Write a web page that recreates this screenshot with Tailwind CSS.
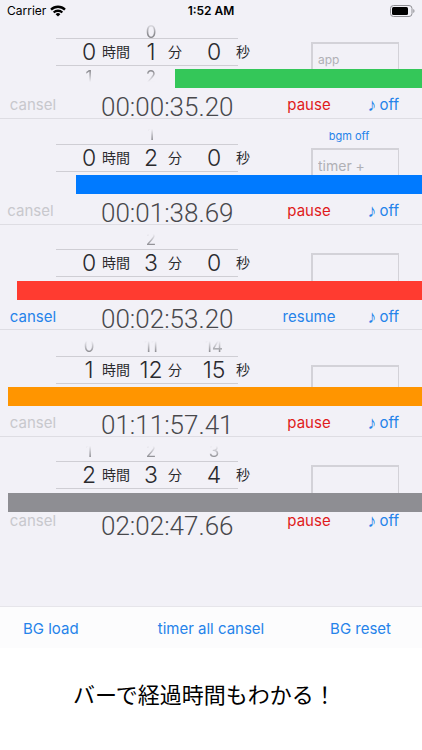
<!DOCTYPE html>
<html lang="ja">
<head>
<meta charset="utf-8">
<meta name="viewport" content="width=device-width, initial-scale=1">
<title>Timers</title>
<script src="https://cdn.jsdelivr.net/npm/@tailwindcss/browser@4"></script>
</head>
<body class="flex min-h-screen flex-col bg-white font-['Inter','Noto_Sans_CJK_JP',sans-serif] text-[#2a2a2e]">
<header class="grid h-[22px] grid-cols-3 items-center bg-[#f2f1f7] pr-[7px] pl-[7px] text-black">
  <div class="flex items-center gap-1 text-[12px]">
    <span>Carrier</span>
    <svg class="h-[12px] w-[16px]" viewBox="0 0 16 12" fill="none" stroke="currentColor" stroke-width="2.3" aria-label="Wi-Fi">
      <path d="M1 4.6a10 10 0 0 1 14 0"/>
      <path d="M3.7 7.5a6.1 6.1 0 0 1 8.6 0"/>
      <path d="M8 11.6 5.6 9.2a3.4 3.4 0 0 1 4.8 0z" fill="currentColor" stroke="none"/>
    </svg>
  </div>
  <div class="text-center text-[12px] font-semibold">1:52 AM</div>
  <svg class="h-[12px] w-[25px] justify-self-end" viewBox="0 0 25 12" aria-label="Battery">
    <rect x=".5" y=".5" width="21.5" height="11" rx="3" fill="none" stroke="#8e8e93"/>
    <rect x="2" y="2" width="16" height="8" rx="1.5" fill="#000"/>
    <path d="M23.3 4v4c1.6-.6 1.6-3.4 0-4z" fill="#8e8e93"/>
  </svg>
</header>

<main id="timers" class="bg-[#f2f1f7] pb-[65px]"></main>

<nav class="grid h-[42px] grid-cols-[1fr_auto_1fr] items-center border-t border-[#e6e5ea] bg-[#fcfcfd] pt-[3px] text-[15px] text-[#2583ea]">
  <button type="button" class="justify-self-start pl-[23px]">BG load</button>
  <button type="button">timer all cansel</button>
  <button type="button" class="justify-self-end pr-[31px]">BG reset</button>
</nav>

<p class="bg-white pt-[29px] pl-[73px] font-['Noto_Sans_CJK_JP',sans-serif] text-[22px] leading-[32px] text-black">バーで経過時間もわかる！</p>

<script>
const timers = [
  { prev: ['', '0', ''], now: [0, 1, 0], next: [1, 2, 1], time: '00:00:35.20', left: 58.5, color: 'bg-[#34c759]', top: 'h-[16px]', below: 'h-[22px]', foot: 'h-[31px] items-center border-b', box: 'pt-[20px]', label: 'app', size: 'text-[12px]' },
  { prev: ['', '1', ''], now: [0, 2, 0], next: [1, 3, 1], time: '00:01:38.69', left: 82, color: 'bg-[#007aff]', top: 'h-[25px]', below: 'h-[22px]', foot: 'h-[31px] items-center border-b', box: '', label: 'timer +', size: 'text-[14px]', bgm: true },
  { prev: ['', '2', ''], now: [0, 3, 0], next: [1, 4, 1], time: '00:02:53.20', left: 96, color: 'bg-[#ff3b30]', top: 'h-[24px]', below: 'h-[23px]', foot: 'h-[30px] items-center border-b', box: 'pt-[28px]', label: '', size: 'text-[14px]', paused: true },
  { prev: [0, 11, 14], now: [1, 12, 15], next: [2, 13, 16], time: '01:11:57.41', left: 98.2, color: 'bg-[#ff9500]', top: 'h-[26px]', below: 'h-[22px]', foot: 'h-[31px] items-center border-b', box: 'pt-[35px]', label: '', size: 'text-[14px]' },
  { prev: [1, 2, 3], now: [2, 3, 4], next: [3, 4, 5], time: '02:02:47.66', left: 98, color: 'bg-[#8e8e93]', top: 'h-[24px]', below: 'h-[23px]', foot: 'h-[29px] items-start', btn: 'leading-[18px]', clock: 'pt-[1px]', box: 'pt-[28px]', label: '', size: 'text-[14px]' },
];
const cols = 'grid grid-cols-[26px_32px_34px_30px_32px] pl-[20px] text-center';
const faint = n => `<span>${n[0]}</span><span></span><span>${n[1]}</span><span></span><span>${n[2]}</span>`;
document.getElementById('timers').innerHTML = timers.map((t, i) => `
<section aria-label="Timer ${i + 1}">
  <div class="relative flex justify-between pr-[23px] pl-[56px]">
    <div class="w-[200px]">
      <div class="${t.top} ${cols} items-end overflow-hidden text-[17px] leading-[20px] text-[#8e8e93] [mask-image:linear-gradient(to_top,black_0,black_4px,transparent_15px)]">${faint(t.prev)}</div>
      <div class="relative">
        <div class="absolute inset-y-0 left-0 w-[182px] border-y border-[#cfced4]"></div>
        <div class="relative grid h-[28px] grid-cols-[26px_32px_34px_30px_32px_20px] items-center pl-[20px] text-center text-[23px] leading-[28px] font-light">
          <span>${t.now[0]}</span><span class="text-left text-[14px] font-normal">時間</span>
          <span>${t.now[1]}</span><span class="text-left text-[14px] font-normal">分</span>
          <span>${t.now[2]}</span><span class="pl-[6px] text-left text-[14px] font-normal">秒</span>
        </div>
      </div>
      <div class="${t.below} ${cols} items-start overflow-hidden text-[17px] leading-[22px] text-[#8e8e93] [mask-image:linear-gradient(to_bottom,black_0,black_5px,transparent_16px)]">${faint(t.next)}</div>
    </div>
    <div class="${t.box} h-0 w-[88px]">
      ${t.bgm ? '<button type="button" class="block h-[29px] w-full pt-[6px] pr-[12px] text-center text-[11px] text-[#2583ea]">bgm off</button>' : ''}
      <input type="text" aria-label="Timer ${i + 1} name" placeholder="${t.label}" class="block h-[34px] w-full border border-t-2 border-l-2 border-[#d3d2d8] bg-transparent px-[5px] ${t.size} placeholder:text-[#b0b0b5]">
    </div>
    <div class="absolute right-0 bottom-0 h-[19px] ${t.color}" style="width:${t.left}%"></div>
  </div>
  <div class="${t.foot} grid grid-cols-[66px_1fr_60px_83px] border-[#dedde3] text-[15px]">
    <button type="button" ${t.paused ? '' : 'disabled'} class="${t.btn || 'pt-[2px]'} ${t.bgm ? 'pr-[5px]' : ''} ${t.paused ? 'text-[#2583ea]' : 'text-[#c8c8cd]'}">cansel</button>
    <time class="${t.clock || 'pt-[6px]'} pl-[35px] font-['Roboto','Liberation_Sans',sans-serif] text-[26px] leading-[26px] font-light text-[#48484c]">${t.time}</time>
    <button type="button" class="${t.btn || 'pt-[2px]'} ${t.paused ? 'text-[#2583ea]' : 'text-[#e01b1b]'}">${t.paused ? 'resume' : 'pause'}</button>
    <button type="button" class="${t.btn || 'pt-[2px]'} flex items-center justify-end gap-[3px] pr-[23px] text-[#2583ea]"><span class="font-['Liberation_Sans',sans-serif] text-[18px] leading-[18px]">♪</span><span>off</span></button>
  </div>
</section>`).join('');
</script>
</body>
</html>
